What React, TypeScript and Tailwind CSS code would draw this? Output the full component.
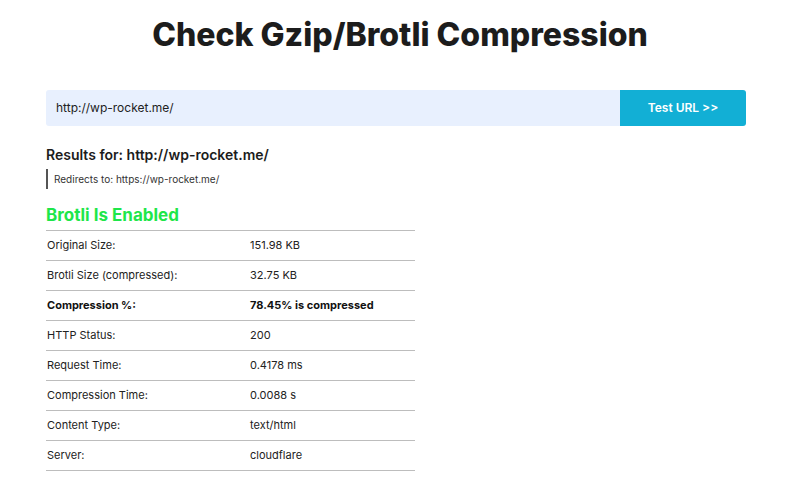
const rows: { label: string; value: string; bold?: boolean }[] = [
  { label: 'Original Size:', value: '151.98 KB' },
  { label: 'Brotli Size (compressed):', value: '32.75 KB' },
  { label: 'Compression %:', value: '78.45% is compressed', bold: true },
  { label: 'HTTP Status:', value: '200' },
  { label: 'Request Time:', value: '0.4178 ms' },
  { label: 'Compression Time:', value: '0.0088 s' },
  { label: 'Content Type:', value: 'text/html' },
  { label: 'Server:', value: 'cloudflare' },
];

export default function App() {
  return (
    <div className="w-[800px] h-[492px] bg-white text-[#1d1d1d] font-['Inter','Noto_Sans',sans-serif] overflow-hidden">
      {/* Title */}
      <h1 className="pt-[14px] text-center text-[32px] leading-[42px] font-extrabold text-[#1c1c1c]">
        Check Gzip/Brotli Compression
      </h1>

      <div className="px-[46px] pt-[34px]">
        {/* URL form */}
        <div className="flex h-[36px] w-[700px]">
          <div className="flex-1 flex items-center bg-[#e8f0fe] rounded-l-[3px] px-[10px] text-[12px] text-[#222]">
            http://wp-rocket.me/
          </div>
          <button className="w-[126px] bg-[#12afd5] text-white text-[12px] font-semibold rounded-r-[3px]">
            Test URL &gt;&gt;
          </button>
        </div>

        {/* Results */}
        <h2 className="mt-[19px] text-[14px] leading-[20px] font-semibold text-[#1c1c1c]">
          Results for: http://wp-rocket.me/
        </h2>
        <div className="mt-[4px] border-l-2 border-[#555] pl-[6px] h-[20px] flex items-center text-[10px] text-[#333]">
          Redirects to: https://wp-rocket.me/
        </div>

        <h3 className="mt-[14px] text-[17px] leading-[24px] font-bold text-[#1ee64a]">
          Brotli Is Enabled
        </h3>

        <div className="w-[369px] mt-[3px] border-t border-[#bdbdbd]">
          {rows.map((r) => (
            <div key={r.label} className="flex h-[30px] items-center border-b border-[#bdbdbd] text-[11px]">
              <div className={`w-[204px] pl-[1px] ${r.bold ? 'font-bold text-[#111]' : 'text-[#222]'}`}>{r.label}</div>
              <div className={r.bold ? 'font-bold text-[#111]' : 'text-[#222]'}>{r.value}</div>
            </div>
          ))}
        </div>
      </div>
    </div>
  );
}
